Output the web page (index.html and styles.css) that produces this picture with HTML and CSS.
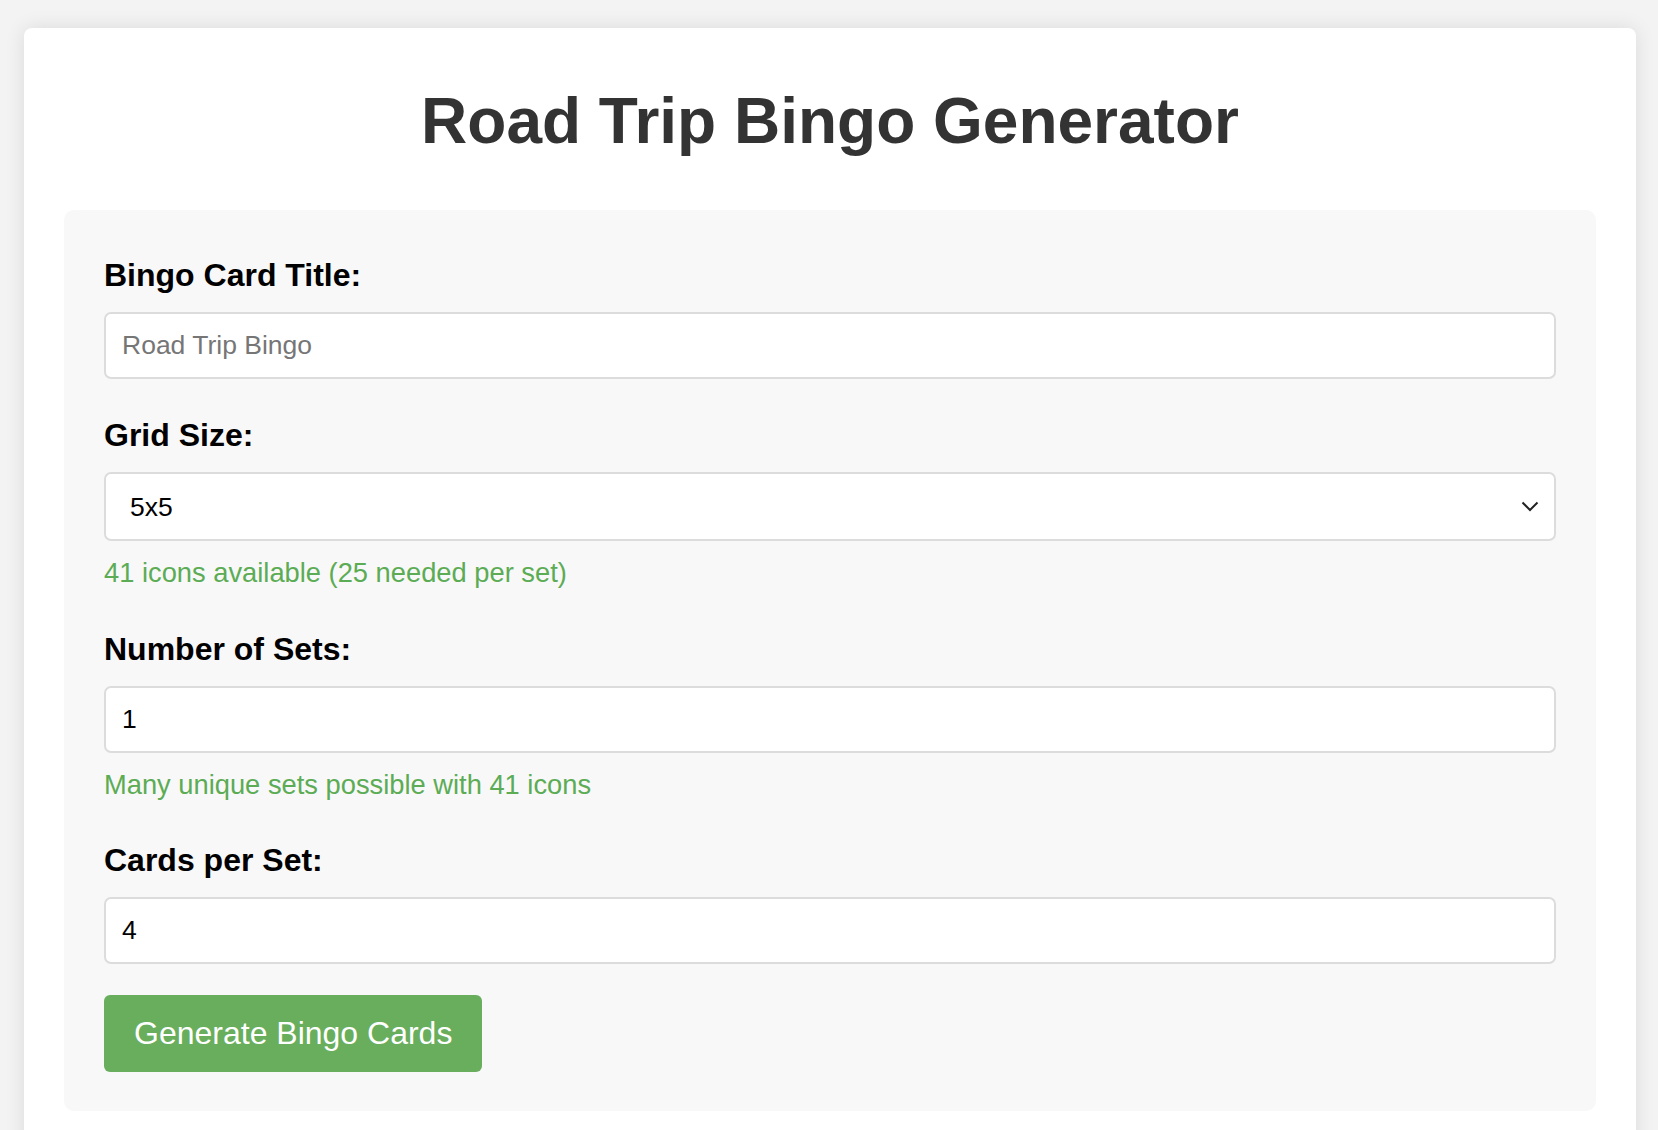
FILE: index.html
```html
<!DOCTYPE html>
<html lang="en">
<head>
<meta charset="utf-8">
<title>Road Trip Bingo Generator</title>
<link rel="stylesheet" href="styles.css">
</head>
<body>
<div class="container">
  <h1 class="title">Road Trip Bingo Generator</h1>
  <div class="form-section">
    <div class="form-group">
      <label class="label" for="title">Bingo Card Title:</label>
      <input class="field" id="title" type="text" placeholder="Road Trip Bingo">
    </div>
    <div class="form-group">
      <label class="label" for="grid">Grid Size:</label>
      <div class="select-wrap">
        <select class="field select" id="grid">
          <option>3x3</option>
          <option>4x4</option>
          <option selected>5x5</option>
        </select>
        <svg class="chevron" width="18" height="11" viewBox="0 0 18 11"><path d="M1.5 1.5 L9 9 L16.5 1.5" fill="none" stroke="#222" stroke-width="2"/></svg>
      </div>
      <div class="hint">41 icons available (25 needed per set)</div>
    </div>
    <div class="form-group">
      <label class="label" for="sets">Number of Sets:</label>
      <input class="field" id="sets" type="text" value="1">
      <div class="hint">Many unique sets possible with 41 icons</div>
    </div>
    <div class="form-group">
      <label class="label" for="cards">Cards per Set:</label>
      <input class="field" id="cards" type="text" value="4">
    </div>
    <button class="btn" type="button">Generate Bingo Cards</button>
  </div>
</div>
</body>
</html>
```
FILE: styles.css
```css
html, body {
  margin: 0;
}
body {
  background: #f3f3f3;
  padding: 28px 22px 0 24px;
  font-family: "Liberation Sans", Arial, Helvetica, sans-serif;
  color: #000;
}
.container {
  background: #fff;
  border-radius: 8px;
  box-shadow: 0 0 20px rgba(0, 0, 0, 0.1);
  padding: 40px 40px 60px;
}
.title {
  font-size: 64px;
  font-weight: bold;
  color: #333;
  text-align: center;
  line-height: 74px;
  margin: 16px 0 52px;
}
.form-section {
  background: #f8f8f8;
  border-radius: 10px;
  padding: 40px 40px 39px;
}
.form-group {
  margin-bottom: 31px;
}
.label {
  display: block;
  font-size: 32px;
  font-weight: bold;
  line-height: 51px;
  margin-bottom: 11px;
}
.field {
  display: block;
  box-sizing: border-box;
  width: 100%;
  height: 67px;
  border: 2px solid #dcdcdc;
  border-radius: 7px;
  background: #fff;
  padding: 0 16px;
  font-family: "Liberation Sans", Arial, sans-serif;
  font-size: 26.5px;
  color: #000;
  outline: none;
}
.field::placeholder {
  color: #767676;
}
.select-wrap {
  position: relative;
}
.select {
  appearance: none;
  -webkit-appearance: none;
  height: 69px;
  padding: 0 24px;
}
.chevron {
  position: absolute;
  right: 17px;
  top: 29px;
  pointer-events: none;
}
.hint {
  color: #5cac55;
  font-size: 27.3px;
  line-height: 36px;
  margin-top: 14px;
  padding-bottom: 1.5px;
}
.btn {
  display: block;
  background: #68ae5c;
  color: #fff;
  border: none;
  border-radius: 6px;
  font-family: "Liberation Sans", Arial, sans-serif;
  font-size: 32px;
  line-height: 37px;
  padding: 20px 30px;
  cursor: pointer;
}
```
